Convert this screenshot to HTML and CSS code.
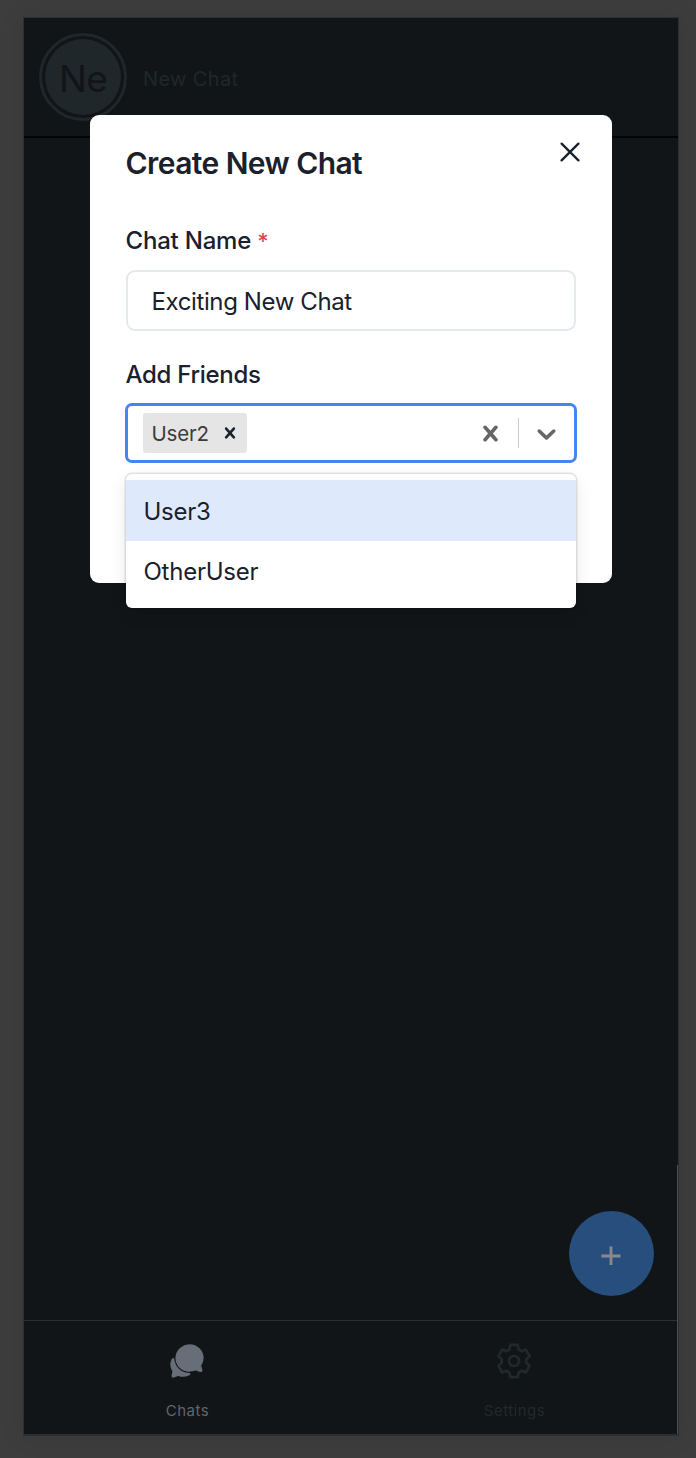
FILE: index.html
```html
<!DOCTYPE html>
<html lang="en">
<head>
<meta charset="utf-8">
<title>Chats</title>
<link rel="stylesheet" href="styles.css">
</head>
<body>
<div class="app">
  <header class="chat-row">
    <div class="avatar"><span class="avatar-fill">Ne</span></div>
    <span class="chat-title">New Chat</span>
  </header>
  <main class="chat-list">
    <button class="fab" aria-label="New chat">
      <svg width="20" height="20" viewBox="0 0 20 20"><path d="M10 .5v18.5M.5 10h19" stroke="#8a8a8a" stroke-width="2.8"/></svg>
    </button>
    <i class="scroll-mark"></i>
  </main>
  <nav class="tabs">
    <a class="tab active">
      <svg width="38" height="38" viewBox="0 0 512 512" fill="currentColor"><path d="M439.9 405.6a26.77 26.77 0 01-9.59-2l-56.78-20.13-.42-.17a9.88 9.88 0 00-3.91-.76 10.32 10.32 0 00-3.62.66c-1.38.52-13.81 5.19-26.85 8.77-7.07 1.94-31.68 8.27-51.43 8.27-50.48 0-97.68-19.4-132.89-54.63A183.38 183.38 0 01100.3 215.1a175.9 175.9 0 014.06-37.58c8.79-40.62 32.07-77.57 65.55-104A194.76 194.76 0 01290.3 30.4c52.21 0 100.86 20 137 56.18 34.16 34.27 52.88 79.33 52.73 126.87a177.86 177.86 0 01-30.3 99.15l-.19.28-.74 1c-.17.23-.34.45-.5.68l-.15.27a21.63 21.63 0 00-1.08 2.09l15.74 55.94a26.42 26.42 0 011.12 7.11 24 24 0 01-24.03 25.63z"/><path d="M299.87 425.39a15.74 15.74 0 00-10.29-8.1c-5.78-1.53-12.52-1.27-17.67-1.65a201.78 201.78 0 01-128.82-58.75A199.21 199.21 0 0186.4 244.16C85 234.42 85 232 85 232a16 16 0 00-28-10.58s-7.88 8.58-11.6 17.19a162.09 162.09 0 0011 150.06C59 393 59 395 58.42 399.5c-2.73 14.11-7.51 39-10 51.91a24 24 0 008 22.92l.46.39A24.34 24.34 0 0072 480a23.42 23.42 0 009-1.79l53.51-20.65a8.05 8.05 0 015.72 0c21.07 7.84 43 12 63.78 12a176 176 0 0074.91-16.66c5.46-2.56 14-5.34 19-11.12a15 15 0 001.95-16.39z"/></svg>
      <span>Chats</span>
    </a>
    <a class="tab">
      <svg width="38" height="38" viewBox="-19 -19 38 38" fill="none" stroke="currentColor" stroke-width="2.7" stroke-linejoin="round"><path d="M-4.6-11.6L-3.8-16.1H3.8L4.6-11.6L7.6-9.8L11.8-11.4L15.6-4.8L12.2-1.8V1.8L15.6 4.8L11.8 11.4L7.6 9.8L4.6 11.6L3.8 16.1H-3.8L-4.6 11.6L-7.6 9.8L-11.8 11.4L-15.6 4.8L-12.2 1.8V-1.8L-15.6-4.8L-11.8-11.4L-7.6-9.8Z"/><circle r="5"/></svg>
      <span>Settings</span>
    </a>
  </nav>
</div>

<section class="modal">
  <button class="close" aria-label="Close">
    <svg width="20" height="20" viewBox="0 0 20 20"><path d="M1.6 1.6L18.4 18.4M18.4 1.6L1.6 18.4" stroke="#1a202c" stroke-width="2.3" stroke-linecap="round"/></svg>
  </button>
  <h2 class="title">Create New Chat</h2>
  <label class="label name-label">Chat Name<span class="required">*</span></label>
  <div class="input">Exciting New Chat</div>
  <label class="label friends-label">Add Friends</label>
  <div class="select">
    <div class="chip"><span>User2</span>
      <svg width="22" height="22" viewBox="0 0 20 20" fill="#1a202c"><path d="M14.348 14.849c-0.469 0.469-1.229 0.469-1.697 0l-2.651-3.030-2.651 3.029c-0.469 0.469-1.229 0.469-1.697 0-0.469-0.469-0.469-1.229 0-1.697l2.758-3.15-2.759-3.152c-0.469-0.469-0.469-1.228 0-1.697s1.228-0.469 1.697 0l2.652 3.031 2.651-3.031c0.469-0.469 1.228-0.469 1.697 0s0.469 1.229 0 1.697l-2.758 3.152 2.758 3.15c0.469 0.469 0.469 1.229 0 1.698z"/></svg>
    </div>
    <div class="indicators">
      <svg width="31" height="31" viewBox="0 0 20 20" fill="#666"><path d="M14.348 14.849c-0.469 0.469-1.229 0.469-1.697 0l-2.651-3.030-2.651 3.029c-0.469 0.469-1.229 0.469-1.697 0-0.469-0.469-0.469-1.229 0-1.697l2.758-3.15-2.759-3.152c-0.469-0.469-0.469-1.228 0-1.697s1.228-0.469 1.697 0l2.652 3.031 2.651-3.031c0.469-0.469 1.228-0.469 1.697 0s0.469 1.229 0 1.697l-2.758 3.152 2.758 3.15c0.469 0.469 0.469 1.229 0 1.698z"/></svg>
      <i class="divider"></i>
      <svg width="31" height="31" viewBox="0 0 20 20" fill="#666"><path d="M4.516 7.548c0.436-0.446 1.043-0.481 1.576 0l3.908 3.747 3.908-3.747c0.533-0.481 1.141-0.446 1.574 0 0.436 0.445 0.408 1.197 0 1.615-0.406 0.418-4.695 4.502-4.695 4.502-0.217 0.223-0.502 0.335-0.787 0.335s-0.57-0.112-0.789-0.335c0 0-4.287-4.084-4.695-4.502s-0.436-1.17 0-1.615z"/></svg>
    </div>
    <div class="menu">
      <div class="option focused">User3</div>
      <div class="option other">OtherUser</div>
    </div>
  </div>
</section>
</body>
</html>
```
FILE: styles.css
```css
* { box-sizing: border-box; }
body {
  margin: 0;
  height: 1458px;
  padding: 17px 17px 22px 23px;
  background: #3d3d3d;
  font-family: Inter, "Liberation Sans", sans-serif;
  color: #1a202c;
  overflow: hidden;
}
button { border: 0; padding: 0; background: none; display: flex; }
svg { display: block; flex: none; }

.app {
  height: 1419px;
  display: flex;
  flex-direction: column;
  position: relative;
  border: 1px solid #2d2e2f;
  border-bottom-width: 2px;
  background: #111517;
  box-shadow: 0 0 24px rgba(0, 0, 0, .1);
}
.chat-row {
  height: 120px;
  display: flex;
  align-items: center;
  padding-left: 15px;
  gap: 16px;
  border-bottom: 2px solid #030404;
}
.avatar {
  width: 88px;
  height: 88px;
  padding: 3px;
  border: 3px solid #1f272a;
  border-radius: 50%;
}
.avatar-fill {
  display: flex;
  align-items: center;
  justify-content: center;
  height: 100%;
  padding-top: 3px;
  border-radius: 50%;
  background: #1f272a;
  color: #111517;
  font-size: 37px;
  letter-spacing: -.8px;
}
.chat-title { padding-top: 3px; font-size: 20px; letter-spacing: .35px; color: #20272a; }
.chat-list {
  flex: 1;
  display: flex;
  align-items: flex-end;
  justify-content: flex-end;
  padding: 0 24.5px 24px 0;
}
.fab {
  width: 85px;
  height: 85px;
  padding-top: 5px;
  border-radius: 50%;
  background: #284e7d;
  align-items: center;
  justify-content: center;
}
.scroll-mark {
  position: absolute;
  right: 0;
  top: 1147px;
  bottom: 0;
  width: 1px;
  background: #4b4d4e;
}
.tabs { height: 114px; display: flex; border-top: 1px solid #2c2f31; }
.tab {
  flex: 1;
  display: flex;
  flex-direction: column;
  align-items: center;
  padding-top: 20.5px;
  gap: 20px;
  font-size: 15px;
  line-height: 22px;
  letter-spacing: .5px;
  color: #22292c;
}
.tab svg { margin-right: 1px; }
.tab.active { color: #676e77; }
.tab.active span { color: #60656b; }

.modal {
  position: absolute;
  left: 89.5px;
  top: 115px;
  width: 522.5px;
  height: 468px;
  padding: 24px 36px 0;
  border-radius: 9px;
  background: #fff;
}
.close { position: absolute; right: 32.5px; top: 27px; }
.title { margin: 0; font-size: 30px; line-height: 48px; font-weight: 600; letter-spacing: -.58px; }
.label { display: block; font-size: 24px; line-height: 36px; font-weight: 500; letter-spacing: -.2px; }
.name-label { margin-top: 36px; }
.friends-label { margin-top: 26px; letter-spacing: -.3px; }
.required { margin-left: 6px; color: #d9494b; font-size: 22px; }
.input {
  height: 61px;
  margin-top: 11px;
  padding-left: 24px;
  border: 2px solid #e4e9f0;
  border-radius: 9px;
  font-size: 24px;
  line-height: 60px;
  letter-spacing: -.39px;
}
.select {
  position: relative;
  display: flex;
  align-items: center;
  justify-content: space-between;
  height: 60px;
  margin: 10px -1px 0;
  padding: 0 12px 0 15px;
  border: 3px solid #4484f7;
  border-radius: 7px;
}
.chip {
  display: flex;
  align-items: center;
  justify-content: space-between;
  width: 104px;
  height: 40px;
  padding: 0 6px 0 9px;
  border-radius: 3px;
  background: #e5e5e5;
  color: #3b3b3b;
  font-size: 20.5px;
  letter-spacing: -.2px;
}
.chip span { padding-top: 1px; }
.indicators { display: flex; align-items: center; gap: 12px; }
.divider { width: 1.5px; height: 30px; background: #ccc; }
.menu {
  position: absolute;
  left: -2px;
  right: -1.5px;
  top: 67.5px;
  height: 134px;
  padding: 6px 0;
  border-radius: 6px;
  background: #fff;
  box-shadow: 0 0 0 1.5px rgba(0, 0, 0, .1), 0 6px 17px rgba(0, 0, 0, .1);
}
.option { height: 61px; padding-left: 18px; font-size: 24px; line-height: 63px; letter-spacing: -.25px; }
.other { line-height: 61px; }
.focused { background: #deeafc; }
```
